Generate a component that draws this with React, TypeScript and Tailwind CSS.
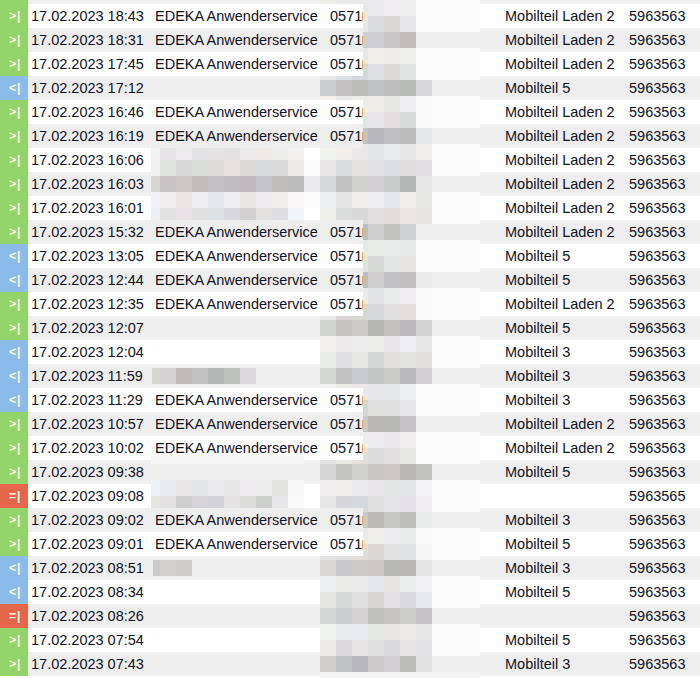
import React from "react";

type Dir = "out" | "in" | "missed";

type Call = {
  dir: Dir;
  time: string;
  edeka: boolean;
  device: string;
  ext: string;
};

const calls: Call[] = [
  { dir: "out", time: "18:43", edeka: true, device: "Mobilteil Laden 2", ext: "5963563" },
  { dir: "out", time: "18:31", edeka: true, device: "Mobilteil Laden 2", ext: "5963563" },
  { dir: "out", time: "17:45", edeka: true, device: "Mobilteil Laden 2", ext: "5963563" },
  { dir: "in", time: "17:12", edeka: false, device: "Mobilteil 5", ext: "5963563" },
  { dir: "out", time: "16:46", edeka: true, device: "Mobilteil Laden 2", ext: "5963563" },
  { dir: "out", time: "16:19", edeka: true, device: "Mobilteil Laden 2", ext: "5963563" },
  { dir: "out", time: "16:06", edeka: false, device: "Mobilteil Laden 2", ext: "5963563" },
  { dir: "out", time: "16:03", edeka: false, device: "Mobilteil Laden 2", ext: "5963563" },
  { dir: "out", time: "16:01", edeka: false, device: "Mobilteil Laden 2", ext: "5963563" },
  { dir: "out", time: "15:32", edeka: true, device: "Mobilteil Laden 2", ext: "5963563" },
  { dir: "in", time: "13:05", edeka: true, device: "Mobilteil 5", ext: "5963563" },
  { dir: "in", time: "12:44", edeka: true, device: "Mobilteil 5", ext: "5963563" },
  { dir: "out", time: "12:35", edeka: true, device: "Mobilteil Laden 2", ext: "5963563" },
  { dir: "out", time: "12:07", edeka: false, device: "Mobilteil 5", ext: "5963563" },
  { dir: "in", time: "12:04", edeka: false, device: "Mobilteil 3", ext: "5963563" },
  { dir: "in", time: "11:59", edeka: false, device: "Mobilteil 3", ext: "5963563" },
  { dir: "in", time: "11:29", edeka: true, device: "Mobilteil 3", ext: "5963563" },
  { dir: "out", time: "10:57", edeka: true, device: "Mobilteil Laden 2", ext: "5963563" },
  { dir: "out", time: "10:02", edeka: true, device: "Mobilteil Laden 2", ext: "5963563" },
  { dir: "out", time: "09:38", edeka: false, device: "Mobilteil 5", ext: "5963563" },
  { dir: "missed", time: "09:08", edeka: false, device: "", ext: "5963565" },
  { dir: "out", time: "09:02", edeka: true, device: "Mobilteil 3", ext: "5963563" },
  { dir: "out", time: "09:01", edeka: true, device: "Mobilteil 5", ext: "5963563" },
  { dir: "in", time: "08:51", edeka: false, device: "Mobilteil 3", ext: "5963563" },
  { dir: "in", time: "08:34", edeka: false, device: "Mobilteil 5", ext: "5963563" },
  { dir: "missed", time: "08:26", edeka: false, device: "", ext: "5963563" },
  { dir: "out", time: "07:54", edeka: false, device: "Mobilteil 5", ext: "5963563" },
  { dir: "out", time: "07:43", edeka: false, device: "Mobilteil 3", ext: "5963563" },
];

// pixelated redaction --------------------------------------------------------
const ROW_TOP = 4;
const ROW_H = 24;
const CELL = 16;

// hidden caller names (x range of the text that was pixelated)
const hiddenNames: Record<number, [number, number]> = {
  6: [155, 300],
  7: [155, 306],
  8: [155, 292],
  15: [155, 250],
  20: [155, 290],
  23: [155, 190],
};

const redactRects: [number, number, number, number][] = [
  [320, 0, 480, 678],
  [151, 148, 320, 220],
  [152, 364, 256, 388],
  [151, 456, 304, 508],
  [153, 556, 192, 580],
];

const hash = (a: number, b: number) => {
  const s = Math.sin(a * 12.9898 + b * 78.233) * 43758.5453;
  return s - Math.floor(s);
};

const rowAt = (y: number) => Math.floor((y - ROW_TOP) / ROW_H);

function inkAt(x: number, y: number) {
  const r = rowAt(y);
  const ty = y - (ROW_TOP + r * ROW_H);
  if (ty < 7 || ty >= 20) return false;
  const call = calls[r];
  const numEnd = call && call.edeka ? 410 + 10 * hash(r, 3) : 418 + 14 * hash(r, 7);
  if (x >= 326 && x < numEnd) return true;
  const n = hiddenNames[r];
  if (n && x >= n[0] && x < n[1]) return true;
  return false;
}

function blockColor(x0: number, y0: number, x1: number, y1: number, cx: number, cy: number) {
  let sum = 0;
  let ink = 0;
  let n = 0;
  const rows = new Set<number>();
  for (let y = y0; y < y1; y++) {
    const r = rowAt(y);
    rows.add(r);
    const bg = r % 2 === 0 ? 255 : 238;
    for (let x = x0; x < x1; x++) {
      sum += bg;
      if (inkAt(x, y)) ink += bg - 20;
      n++;
    }
  }
  if (ink === 0 && rows.size === 1) return null;
  const d = 0.16 + 0.15 * hash(cx, cy);
  const v = (sum - d * ink) / n;
  const f = Math.min(1, ink / n / 40);
  const tr = (hash(cx + 31, cy) - 0.5) * 8 * f;
  const tb = (hash(cx, cy + 57) - 0.5) * 10 * f;
  const c = (k: number) => Math.max(0, Math.min(255, Math.round(k)));
  return `rgb(${c(v + tr)}, ${c(v)}, ${c(v + tb)})`;
}

function Mosaic() {
  const blocks: { l: number; t: number; w: number; h: number; bg: string }[] = [];
  redactRects.forEach(([rx0, ry0, rx1, ry1]) => {
    for (let gy = Math.floor(ry0 / CELL) * CELL; gy < ry1; gy += CELL) {
      for (let gx = Math.floor(rx0 / CELL) * CELL; gx < rx1; gx += CELL) {
        const x0 = Math.max(gx, rx0);
        const x1 = Math.min(gx + CELL, rx1);
        const y0 = Math.max(gy, ry0);
        const y1 = Math.min(gy + CELL, ry1);
        if (x1 <= x0 || y1 <= y0) continue;
        const bg = blockColor(x0, y0, x1, y1, gx / CELL, gy / CELL);
        if (bg) blocks.push({ l: x0, t: y0, w: x1 - x0, h: y1 - y0, bg });
      }
    }
  });
  return (
    <div className="pointer-events-none absolute inset-0">
      {blocks.map((b, i) => (
        <div
          key={i}
          className="absolute"
          style={{ left: b.l, top: b.t, width: b.w, height: b.h, background: b.bg }}
        />
      ))}
    </div>
  );
}

// rows -----------------------------------------------------------------------
const iconBg: Record<Dir, string> = {
  out: "bg-[#92d36a]",
  in: "bg-[#8cbbe9]",
  missed: "bg-[#e5664a]",
};

const iconGlyph: Record<Dir, string> = {
  out: ">",
  in: "<",
  missed: "=",
};

function CallRow({ call, index }: { call: Call; index: number }) {
  const rowBg = index % 2 === 0 ? "bg-white" : "bg-[#eeeeee]";
  return (
    <div className={`flex h-[24px] leading-[24px] ${rowBg}`}>
      <div className={`flex w-[28px] shrink-0 items-center pl-[9px] text-[12px] font-bold text-[#fdfbe2] ${iconBg[call.dir]}`}>
        <span>{iconGlyph[call.dir]}</span>
        <span className="ml-[1px]">|</span>
      </div>
      <div className="w-[127px] shrink-0 pl-[3px]">17.02.2023 {call.time}</div>
      <div className="w-[165px] shrink-0">{call.edeka ? "EDEKA Anwenderservice" : ""}</div>
      <div className="w-[185px] shrink-0">
        {call.edeka && (
          <div className={`relative z-10 flex h-full w-[43px] items-center pl-[10px] ${rowBg}`}>
            <span>0571</span>
            <span className="h-[9px] w-[1px] bg-[#e9a44c]" />
          </div>
        )}
      </div>
      <div className="w-[124px] shrink-0">{call.device}</div>
      <div>{call.ext}</div>
    </div>
  );
}

export default function App() {
  return (
    <div className="relative h-[678px] w-[700px] overflow-hidden bg-white font-['Liberation_Sans',Arial,sans-serif] text-[14.5px] text-[#10101c]">
      {/* tail of the previous (scrolled away) row */}
      <div className="flex h-[4px] bg-[#eeeeee]">
        <div className="w-[28px] bg-[#92d36a]" />
      </div>
      {calls.map((c, i) => (
        <CallRow key={c.time} call={c} index={i} />
      ))}
      <Mosaic />
    </div>
  );
}
